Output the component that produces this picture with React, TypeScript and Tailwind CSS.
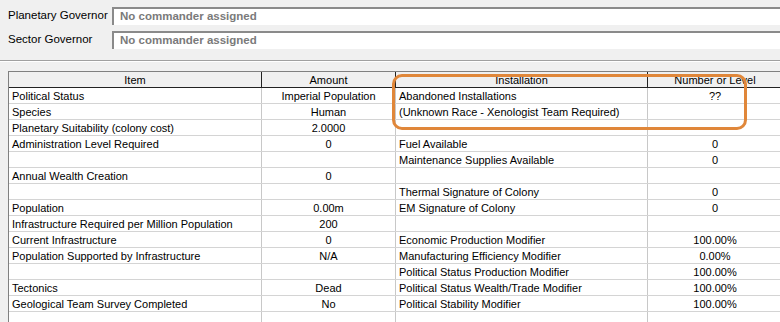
import React from "react";

type Row = [string, string, string, string];

const rows: Row[] = [
  ["Political Status", "Imperial Population", "Abandoned Installations", "??"],
  ["Species", "Human", "(Unknown Race - Xenologist Team Required)", ""],
  ["Planetary Suitability (colony cost)", "2.0000", "", ""],
  ["Administration Level Required", "0", "Fuel Available", "0"],
  ["", "", "Maintenance Supplies Available", "0"],
  ["Annual Wealth Creation", "0", "", ""],
  ["", "", "Thermal Signature of Colony", "0"],
  ["Population", "0.00m", "EM Signature of Colony", "0"],
  ["Infrastructure Required per Million Population", "200", "", ""],
  ["Current Infrastructure", "0", "Economic Production Modifier", "100.00%"],
  ["Population Supported by Infrastructure", "N/A", "Manufacturing Efficiency Modifier", "0.00%"],
  ["", "", "Political Status Production Modifier", "100.00%"],
  ["Tectonics", "Dead", "Political Status Wealth/Trade Modifier", "100.00%"],
  ["Geological Team Survey Completed", "No", "Political Stability Modifier", "100.00%"],
  ["", "", "", ""],
];

const GovernorField = ({ label }: { label: string }) => (
  <div className="flex items-center h-[18px]">
    <span className="w-[104px] shrink-0 text-[11.5px]">{label}</span>
    <div className="flex-1 h-[18px] bg-white border-t-2 border-l-2 border-t-[#8a8a8a] border-l-[#8a8a8a] flex items-center pl-[6px]">
      <span className="font-bold text-[#7a7a7a] text-[11.5px]">No commander assigned</span>
    </div>
  </div>
);

export default function App() {
  return (
    <div className="relative w-[780px] h-[322px] overflow-hidden bg-[#f0f0f0] text-[11px] text-black font-['Liberation_Sans',Arial,sans-serif]">
      <div className="pt-[7px] pl-[8px]">
        <GovernorField label="Planetary Governor" />
        <div className="h-[6px]" />
        <GovernorField label="Sector Governor" />
      </div>
      <div className="mt-[11px] h-[2px] border-t border-[#a0a0a0] border-b border-b-white" />

      <div className="mt-[9px] ml-[8px] w-[800px] border-t border-l border-[#808080] bg-white">
        <div className="flex h-[16px] bg-[#f0f0f0] border-b border-[#222]">
          <div className="w-[253px] text-center border-r border-[#222] leading-[16px]">Item</div>
          <div className="w-[134px] text-center border-r border-[#222] leading-[16px]">Amount</div>
          <div className="w-[252px] text-center border-r border-[#222] leading-[16px]">Installation</div>
          <div className="w-[134px] text-center leading-[16px]">Number or Level</div>
        </div>
        {rows.map((r, i) => (
          <div key={i} className="flex h-[16px] border-b border-[#d4d4d4]">
            <div className="w-[253px] pl-[3px] border-r border-[#c8c8c8] leading-[16px] whitespace-nowrap">{r[0]}</div>
            <div className="w-[134px] text-center border-r border-[#c8c8c8] leading-[16px]">{r[1]}</div>
            <div className="w-[252px] pl-[3px] border-r border-[#c8c8c8] leading-[16px] whitespace-nowrap">{r[2]}</div>
            <div className="w-[134px] text-center leading-[16px]">{r[3]}</div>
          </div>
        ))}
      </div>

      <div className="absolute left-[392px] top-[74px] w-[355px] h-[56px] border-[3px] border-[#e0873a] rounded-[10px] pointer-events-none" />
    </div>
  );
}
